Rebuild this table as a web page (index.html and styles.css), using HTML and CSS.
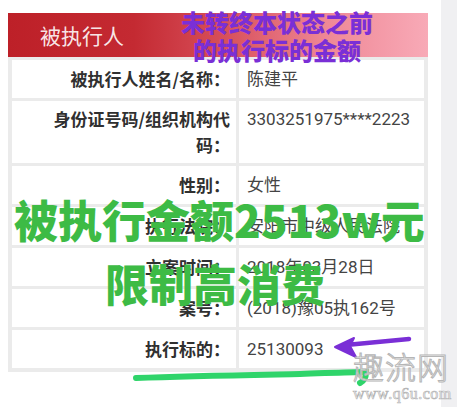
FILE: index.html
```html
<!DOCTYPE html>
<html lang="zh">
<head>
<meta charset="utf-8">
<link rel="stylesheet" href="styles.css">
</head>
<body>
<div class="page">
  <div class="main">
    <div class="card">
      <div class="card-head">被执行人</div>
      <div class="table">
        <div class="label">被执行人姓名/名称：</div><div class="value">陈建平</div>
        <div class="label tall">身份证号码/组织机构代码：</div><div class="value tall">3303251975****2223</div>
        <div class="label">性别：</div><div class="value">女性</div>
        <div class="label">执行法院：</div><div class="value">安阳市中级人民法院</div>
        <div class="label">立案时间：</div><div class="value">2018年03月28日</div>
        <div class="label">案号：</div><div class="value">(2018)豫05执162号</div>
        <div class="label">执行标的：</div><div class="value">25130093</div>
      </div>
    </div>
  </div>
  <div class="strip"></div>

  <div class="note-purple">未转终本状态之前<br>的执行标的金额</div>
  <div class="note-green">被执行金额2513w元<br>限制高消费</div>

  <svg class="marks" width="457" height="407" viewBox="0 0 457 407">
    <path d="M409 339 L346 345" stroke="#7a2fd6" stroke-width="4.5" fill="none" stroke-linecap="round"/>
    <path d="M335 347 L354 338 L350 346 L356 357 Z" fill="#7a2fd6" stroke="#7a2fd6" stroke-width="2" stroke-linejoin="round"/>
    <path d="M136 378 C190 376 250 375 300 374 C330 373 350 372 366 372 C366 377 364 381 360 383" stroke="#2fd46a" stroke-width="6" fill="none" stroke-linecap="round"/>
  </svg>

  <div class="watermark">
    <div class="wm-big">趣流网</div>
    <div class="wm-small">www.q6u.com</div>
  </div>
</div>
</body>
</html>
```

FILE: styles.css
```css
html, body {
  margin: 0;
  padding: 0;
  background: #ffffff;
}

body {
  font-family: "Noto Sans CJK SC", "Noto Sans", sans-serif;
}

.page {
  position: relative;
  display: flex;
  width: 457px;
  height: 407px;
  overflow: hidden;
}

.main {
  width: 441px;
  padding: 13px 0 0 8px;
  box-sizing: border-box;
}

.strip {
  flex: 1;
  background: #f0f0f2;
}

.card {
  width: 420px;
}

.card-head {
  height: 44px;
  line-height: 44px;
  padding-left: 32px;
  font-size: 21px;
  color: rgba(255, 255, 255, 0.9);
  background: linear-gradient(90deg, #bd2028 0%, #c42a32 30%, #d8505b 52%, #ef8896 76%, #f8aab7 100%);
}

.table {
  display: grid;
  grid-template-columns: 224px 1fr;
  gap: 3px;
  padding: 3px 4px 4px 4px;
  background: #ebebeb;
}

.label, .value {
  background: #ffffff;
  font-size: 17px;
  line-height: 26px;
  padding-top: 6px;
  padding-bottom: 6px;
}

.label.tall, .value.tall {
  padding-top: 5px;
  padding-bottom: 5px;
}

.label {
  text-align: right;
  font-weight: 700;
  color: #303030;
  padding-left: 36px;
  padding-right: 6px;
}

.value {
  font-family: "Roboto", "Noto Sans CJK SC", sans-serif;
  color: #444444;
  padding-left: 8px;
  padding-right: 2px;
}

.note-purple {
  position: absolute;
  left: 178px;
  top: 8px;
  width: 198px;
  text-align: center;
  font-size: 24px;
  line-height: 28px;
  font-weight: 900;
  color: #7a2fd6;
}

.note-green {
  position: absolute;
  left: 14px;
  top: 187px;
  width: 402px;
  text-align: center;
  font-size: 44px;
  line-height: 64px;
  font-weight: 900;
  color: #3dbb45;
  white-space: nowrap;
}

.marks {
  position: absolute;
  left: 0;
  top: 0;
}

.watermark {
  position: absolute;
  left: 353px;
  top: 345px;
  width: 96px;
  text-align: center;
}

.wm-big {
  font-family: "Noto Sans CJK SC", sans-serif;
  font-size: 31px;
  line-height: 42px;
  font-weight: 300;
  color: rgba(255, 255, 255, 0.75);
  -webkit-text-stroke: 1px #b5b5b5;
  letter-spacing: 1px;
}

.wm-small {
  font-family: "Liberation Serif", serif;
  font-size: 16px;
  line-height: 14px;
  letter-spacing: 0.5px;
  color: rgba(255, 255, 255, 0.75);
  -webkit-text-stroke: 0.7px #b5b5b5;
}
```
